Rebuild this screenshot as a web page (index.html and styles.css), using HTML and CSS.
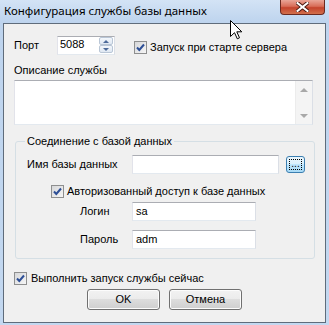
FILE: index.html
```html
<!DOCTYPE html>
<html lang="ru">
<head>
  <meta charset="UTF-8">
  <title>Конфигурация службы базы данных</title>
  <link rel="stylesheet" href="styles.css">
</head>
<body>
  <div class="window">
    <div class="titlebar">
      <span class="title">Конфигурация службы базы данных</span>
      <div class="close">
        <svg width="13" height="10" viewBox="0 0 13 10">
          <path d="M1.5 1 L11.5 9 M11.5 1 L1.5 9" stroke="#4a1a12" stroke-width="4" stroke-linecap="square"/>
          <path d="M1.5 1 L11.5 9 M11.5 1 L1.5 9" stroke="#fff" stroke-width="2" stroke-linecap="square"/>
        </svg>
      </div>
    </div>

    <div class="client">
      <div class="port-row">
        <span class="port-lbl">Порт</span>
        <div class="spin">
          <span class="spin-val">5088</span>
          <div class="spin-btns">
            <span class="spin-btn"><i class="tri-up"></i></span>
            <span class="spin-btn"><i class="tri-down"></i></span>
          </div>
        </div>
        <div class="check start-check">
          <span class="box"><svg width="11" height="11" viewBox="0 0 11 11"><path d="M2 5.5 L4.3 8 L9 2.5" fill="none" stroke="#2d4f96" stroke-width="2"/></svg></span>
          <span>Запуск при старте сервера</span>
        </div>
      </div>

      <div class="desc-lbl">Описание службы</div>
      <div class="memo">
        <div class="memo-scroll">
          <i class="arr-up"></i>
          <i class="arr-down"></i>
        </div>
      </div>

      <fieldset class="group">
        <legend>Соединение с базой данных</legend>
        <div class="db-row">
          <span class="db-lbl">Имя базы данных</span>
          <div class="edit db-edit"></div>
          <div class="browse"><span class="focus">...</span></div>
        </div>
        <div class="check auth-check">
          <span class="box"><svg width="11" height="11" viewBox="0 0 11 11"><path d="M2 5.5 L4.3 8 L9 2.5" fill="none" stroke="#2d4f96" stroke-width="2"/></svg></span>
          <span>Авторизованный доступ к базе данных</span>
        </div>
        <div class="cred-row login-row">
          <span class="cred-lbl">Логин</span>
          <div class="edit cred-edit">sa</div>
        </div>
        <div class="cred-row pass-row">
          <span class="cred-lbl">Пароль</span>
          <div class="edit cred-edit">adm</div>
        </div>
      </fieldset>

      <div class="check run-check">
        <span class="box"><svg width="11" height="11" viewBox="0 0 11 11"><path d="M2 5.5 L4.3 8 L9 2.5" fill="none" stroke="#2d4f96" stroke-width="2"/></svg></span>
        <span>Выполнить запуск службы сейчас</span>
      </div>

      <div class="buttons">
        <div class="btn">OK</div>
        <div class="btn">Отмена</div>
      </div>
    </div>

    <!-- mouse pointer over the title bar -->
    <svg class="cursor" width="13" height="20" viewBox="0 0 13 20">
      <path d="M0.5 0.5 L0.5 16.5 L4.5 12.7 L7.3 18.8 L9.5 17.8 L6.8 11.8 L11.8 11.8 Z" fill="#fff" stroke="#000" stroke-width="1"/>
    </svg>
  </div>
</body>
</html>
```

FILE: styles.css
```css
* {
  box-sizing: border-box;
}

body {
  margin: 0;
  font: 11px/13px "Liberation Sans", Arial, sans-serif;
  color: #000;
  background: #fff;
}

.window {
  position: relative;
  width: 329px;
  height: 325px;
  padding: 0 3px 2px;
  display: flex;
  flex-direction: column;
  background: linear-gradient(#d3e3f5, #bed4ee 22px, #c3d8f0);
}

.titlebar {
  height: 23px;
  display: flex;
  justify-content: space-between;
  align-items: flex-start;
}

.title {
  font: 11.5px/14px "Noto Sans", "Open Sans", sans-serif;
  color: #000;
  padding: 4px 0 0 1px;
}

.close {
  width: 45px;
  height: 15px;
  margin-right: 1px;
  border: 1px solid #6b2a20;
  border-top: none;
  border-radius: 0 0 4px 4px;
  background: linear-gradient(#e9a597, #d86d58 45%, #c4432c 55%, #d2704c);
  display: flex;
  justify-content: center;
  align-items: center;
}

.client {
  flex: 1;
  border: 1px solid #5f6c7b;
  background: #f0f0f0;
  padding: 12px 10px 0;
}

/* first row */
.port-row {
  display: flex;
  align-items: flex-start;
  height: 19px;
}

.port-lbl {
  width: 43px;
  margin-top: 3px;
}

.spin {
  width: 58px;
  height: 19px;
  display: flex;
  background: #fff;
  border: 1px solid;
  border-color: #abadb3 #dbdfe6 #e3e9ef #e2e3ea;
}

.spin-val {
  padding: 1px 0 0 2px;
}

.spin-btns {
  margin: 0 1px 1px auto;
  width: 14px;
  display: flex;
  flex-direction: column;
}

.spin-btn {
  flex: 1;
  display: flex;
  align-items: center;
  justify-content: center;
  border: 1px solid #b9c6d6;
  border-radius: 2px;
  background: linear-gradient(#f3f7fb, #dfe8f2);
}

.tri-up, .tri-down {
  width: 0;
  height: 0;
  border-left: 3px solid transparent;
  border-right: 3px solid transparent;
}

.tri-up {
  border-bottom: 3px solid #4d6a99;
}

.tri-down {
  border-top: 3px solid #4d6a99;
}

/* checkboxes */
.check {
  display: flex;
  align-items: center;
  gap: 3px;
}

.box {
  width: 13px;
  height: 13px;
  border: 1px solid #8e8f8f;
  background: linear-gradient(135deg, #d6d7d9, #f6f6f6);
  display: flex;
  align-items: center;
  justify-content: center;
}

.start-check {
  margin: 5px 0 0 19px;
}

.desc-lbl {
  margin-top: 9px;
}

.memo {
  margin-top: 3px;
  width: 299px;
  height: 45px;
  background: #fff;
  border: 1px solid;
  border-color: #abadb3 #dbdfe6 #e3e9ef #e2e3ea;
  display: flex;
  justify-content: flex-end;
}

.memo-scroll {
  width: 17px;
  background: #f4f4f4;
  border-left: 1px solid #ececec;
  display: flex;
  flex-direction: column;
  justify-content: space-between;
  align-items: center;
  padding: 7px 0 6px;
}

.arr-up, .arr-down {
  width: 0;
  height: 0;
  border-left: 4px solid transparent;
  border-right: 4px solid transparent;
}

.arr-up {
  border-bottom: 4px solid #a8a8a8;
}

.arr-down {
  border-top: 4px solid #a8a8a8;
}

/* connection group */
.group {
  margin: 10px 0 0 1px;
  width: 300px;
  min-width: 0;
  padding: 7px 0 9px 11px;
  border: 1px solid #d5dfe5;
  border-radius: 3px;
}

.group legend {
  padding: 0 2px;
  margin-left: -2px;
}

.db-row, .cred-row {
  display: flex;
  align-items: center;
  height: 19px;
}

.db-lbl {
  width: 105px;
}

.edit {
  height: 19px;
  background: #fff;
  border: 1px solid;
  border-color: #abadb3 #dbdfe6 #e3e9ef #e2e3ea;
  padding: 2px 0 0 3px;
}

.db-edit {
  width: 147px;
}

.browse {
  margin-left: 7px;
  width: 19px;
  height: 17px;
  border: 1px solid #3c7fb1;
  border-radius: 3px;
  background: linear-gradient(#eaf6fd, #d9f0fc 50%, #bee6fd 50%, #a7d9f5);
  padding: 2px;
  display: flex;
}

.focus {
  flex: 1;
  border: 1px dotted #000;
  font-size: 10px;
  line-height: 8px;
  text-align: center;
}

.auth-check {
  margin: 11px 0 0 24px;
}

.login-row {
  margin-top: 4px;
}

.pass-row {
  margin-top: 9px;
}

.cred-lbl {
  margin-left: 53px;
  width: 52px;
}

.cred-edit {
  width: 124px;
}

.run-check {
  margin-top: 13px;
  gap: 4px;
}

.buttons {
  margin-top: 4px;
  display: flex;
  justify-content: center;
  gap: 9px;
}

.btn {
  width: 73px;
  height: 21px;
  border: 1px solid #707070;
  border-radius: 3px;
  background: linear-gradient(#f2f2f2, #ebebeb 50%, #dddddd 50%, #cfcfcf);
  box-shadow: inset 0 0 0 1px #fcfcfc;
  text-align: center;
  line-height: 19px;
}

.cursor {
  position: absolute;
  left: 230px;
  top: 20px;
}
```
